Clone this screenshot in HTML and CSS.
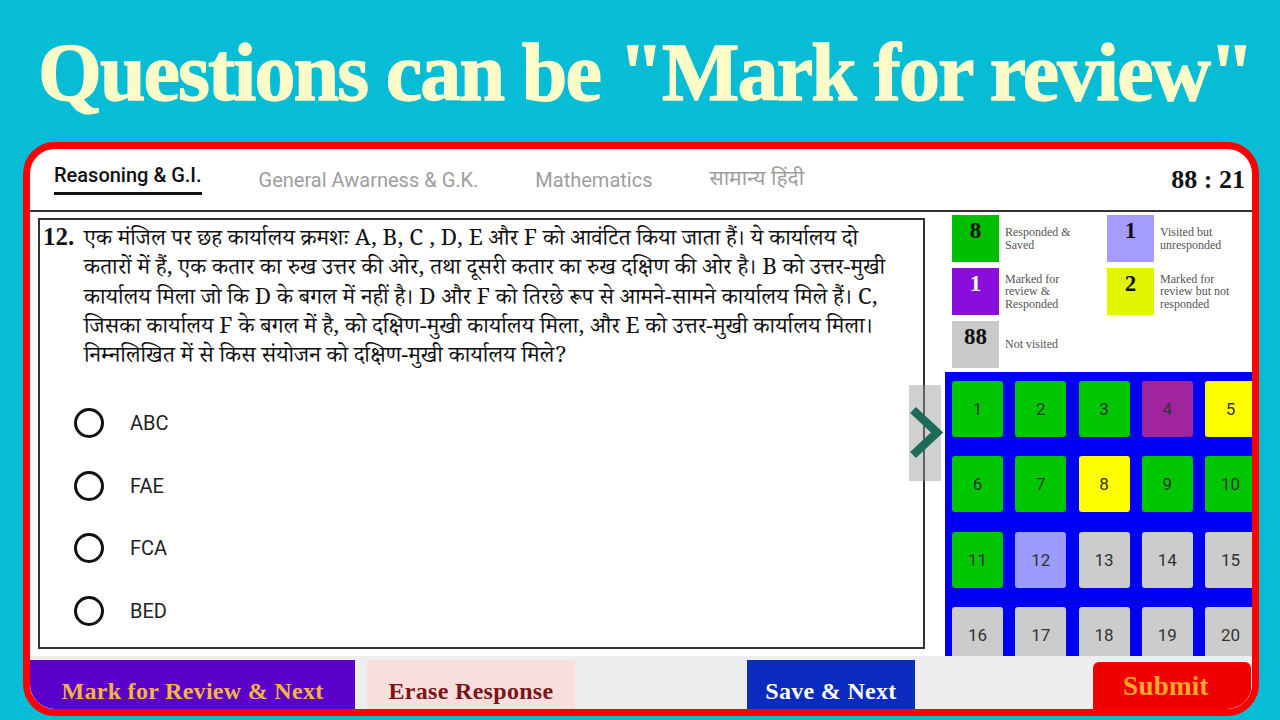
FILE: index.html
```html
<!DOCTYPE html>
<html lang="en">
<head>
<meta charset="utf-8">
<title>Mark for review</title>
<link rel="stylesheet" href="styles.css">
</head>
<body>
<div class="page">
  <h1 class="title">Questions can be "Mark for review"</h1>
  <div class="frame">
    <header class="tabs">
      <div class="tab active">Reasoning &amp; G.I.</div>
      <div class="tab">General Awarness &amp; G.K.</div>
      <div class="tab">Mathematics</div>
      <div class="tab hi">सामान्य हिंदी</div>
      <div class="timer">88 : 21</div>
    </header>
    <div class="main">
      <div class="left">
        <div class="qbox">
          <div class="q">
            <span class="qno">12.</span>
            <div class="qtext">
              <span class="ln">एक मंजिल पर छह कार्यालय क्रमशः A, B, C , D, E और F को आवंटित किया जाता हैं। ये कार्यालय दो</span>
              <span class="ln">कतारों में हैं, एक कतार का रुख उत्तर की ओर, तथा दूसरी कतार का रुख दक्षिण की ओर है। B को उत्तर-मुखी</span>
              <span class="ln">कार्यालय मिला जो कि D के बगल में नहीं है। D और F को तिरछे रूप से आमने-सामने कार्यालय मिले हैं। C,</span>
              <span class="ln">जिसका कार्यालय F के बगल में है, को दक्षिण-मुखी कार्यालय मिला, और E को उत्तर-मुखी कार्यालय मिला।</span>
              <span class="ln">निम्नलिखित में से किस संयोजन को दक्षिण-मुखी कार्यालय मिले?</span>
            </div>
          </div>
          <div class="options">
            <div class="opt"><span class="radio"></span><span class="olabel">ABC</span></div>
            <div class="opt"><span class="radio"></span><span class="olabel">FAE</span></div>
            <div class="opt"><span class="radio"></span><span class="olabel">FCA</span></div>
            <div class="opt"><span class="radio"></span><span class="olabel">BED</span></div>
          </div>
        </div>
        <div class="handle">
          <svg width="32" height="96" viewBox="0 0 32 96" class="chev">
            <path d="M4 25 L28 47.5 L4 70" fill="none" stroke="#1d6b5b" stroke-width="8.5" stroke-linejoin="miter"/>
          </svg>
        </div>
      </div>
      <aside class="panel">
        <div class="legend">
          <div class="litem"><div class="lbox green">8</div><div class="ltext">Responded &amp;<br>Saved</div></div>
          <div class="litem"><div class="lbox lav">1</div><div class="ltext">Visited but<br>unresponded</div></div>
          <div class="litem"><div class="lbox purple">1</div><div class="ltext">Marked for<br>review &amp;<br>Responded</div></div>
          <div class="litem"><div class="lbox yellow">2</div><div class="ltext">Marked for<br>review but not<br>responded</div></div>
          <div class="litem"><div class="lbox grey">88</div><div class="ltext">Not visited</div></div>
        </div>
        <div class="grid">
          <div class="cell c-g">1</div>
          <div class="cell c-g">2</div>
          <div class="cell c-g">3</div>
          <div class="cell c-p">4</div>
          <div class="cell c-y">5</div>
          <div class="cell c-g">6</div>
          <div class="cell c-g">7</div>
          <div class="cell c-y">8</div>
          <div class="cell c-g">9</div>
          <div class="cell c-g">10</div>
          <div class="cell c-g">11</div>
          <div class="cell c-l">12</div>
          <div class="cell c-n">13</div>
          <div class="cell c-n">14</div>
          <div class="cell c-n">15</div>
          <div class="cell c-n">16</div>
          <div class="cell c-n">17</div>
          <div class="cell c-n">18</div>
          <div class="cell c-n">19</div>
          <div class="cell c-n">20</div>
        </div>
      </aside>
    </div>
    <footer class="actions">
      <div class="btn mark">Mark for Review &amp; Next</div>
      <div class="btn erase">Erase Response</div>
      <div class="btn save">Save &amp; Next</div>
      <div class="btn submit">Submit</div>
    </footer>
  </div>
</div>
</body>
</html>
```

FILE: styles.css
```css
* { box-sizing: border-box; }
html, body { margin: 0; padding: 0; }
body { background: #06bdd5; }

.page {
  width: 1280px;
  height: 720px;
  overflow: hidden;
  background: #06bdd5;
}

.title {
  margin: 0;
  padding: 33px 0 0 38px;
  height: 113px;
  font-family: "Liberation Serif", serif;
  font-weight: 700;
  font-size: 82px;
  line-height: 80px;
  letter-spacing: -1.9px;
  color: #fdfbc8;
  -webkit-text-stroke: 1.3px #fdfbc8;
  white-space: nowrap;
}

.frame {
  margin: 29px 0 0 23px;
  width: 1236px;
  height: 574px;
  border: 7px solid #ff0000;
  border-radius: 32px;
  background: #fff;
  overflow: hidden;
  display: flex;
  flex-direction: column;
}

/* header */
.tabs {
  height: 63px;
  flex: none;
  border-bottom: 2px solid #333;
  display: flex;
  align-items: flex-start;
  padding-left: 24px;
  gap: 57px;
  font-family: Roboto, "Noto Sans", sans-serif;
}
.tab {
  padding-top: 19px;
  font-size: 20px;
  line-height: 24px;
  color: #9e9e9e;
  white-space: nowrap;
}
.tab.active {
  padding-top: 14px;
  padding-bottom: 5px;
  font-size: 20px;
  font-weight: 500;
  color: #111;
  border-bottom: 3px solid #111;
}
.tab.hi { font-family: "Noto Sans Devanagari", Roboto, sans-serif; font-size: 21px; }
.timer {
  margin-left: auto;
  padding: 16px 7px 0 0;
  font-family: "Liberation Serif", serif;
  font-weight: 700;
  font-size: 26px;
  line-height: 30px;
  color: #111;
}

/* main */
.main {
  height: 444px;
  flex: none;
  display: flex;
}
.left {
  position: relative;
  width: 915px;
  flex: none;
  padding: 6px 0 0 8px;
}
.qbox {
  width: 887px;
  height: 431px;
  border: 2px solid #333;
  padding: 3px 0 0 3px;
}
.q {
  display: flex;
  align-items: baseline;
}
.qno {
  width: 41px;
  flex: none;
  font-family: "Liberation Serif", serif;
  font-weight: 700;
  font-size: 25px;
  color: #111;
}
.qtext {
  font-family: "Noto Serif Devanagari", "Noto Sans Devanagari", "Liberation Serif", serif;
  font-size: 22.5px;
  line-height: 29.3px;
  color: #111;
}
.ln { display: block; white-space: nowrap; height: 29.3px; }

.options { margin-top: 18px; }
.opt {
  height: 62.7px;
  display: flex;
  align-items: center;
}
.radio {
  width: 30px;
  height: 30px;
  border: 3px solid #111;
  border-radius: 50%;
  margin-left: 31px;
  margin-right: 26px;
  flex: none;
}
.olabel {
  font-family: Roboto, "Noto Sans", sans-serif;
  font-size: 20px;
  color: #222;
}

.handle {
  position: absolute;
  left: 879px;
  top: 173px;
  width: 32px;
  height: 96px;
  background: rgba(150, 150, 150, 0.45);
}
.chev { display: block; overflow: visible; }

/* right panel */
.panel {
  width: 307px;
  flex: none;
  display: flex;
  flex-direction: column;
}
.legend {
  height: 160px;
  flex: none;
  padding: 3px 0 0 7px;
  display: grid;
  grid-template-columns: 155px 145px;
  grid-auto-rows: 47px;
  row-gap: 6px;
}
.litem {
  display: flex;
  align-items: center;
  gap: 6px;
}
.lbox {
  width: 47px;
  height: 47px;
  flex: none;
  padding-top: 4px;
  text-align: center;
  font-family: "Liberation Serif", serif;
  font-weight: 700;
  font-size: 23px;
  line-height: 23px;
  color: #111;
}
.lbox.green { background: #00bf00; }
.lbox.lav { background: #a59cff; }
.lbox.purple { background: #8a0edb; color: #fff; }
.lbox.yellow { background: #e2f600; }
.lbox.grey { background: #c9c9c9; }
.ltext {
  font-family: "Liberation Serif", serif;
  font-size: 12px;
  line-height: 12.6px;
  color: #555;
}

.grid {
  height: 284px;
  flex: none;
  width: 308px;
  background: #0000f5;
  overflow: hidden;
  padding: 9px 0 0 7px;
  display: grid;
  grid-template-columns: repeat(5, 51px);
  grid-auto-rows: 56px;
  column-gap: 12.25px;
  row-gap: 19.3px;
}
.cell {
  border-radius: 3px;
  display: flex;
  align-items: center;
  justify-content: center;
  font-family: Roboto, "Noto Sans", sans-serif;
  font-size: 17px;
  color: #333;
}
.c-g { background: #00c600; }
.c-p { background: #a0249d; }
.c-y { background: #ffff00; }
.c-l { background: #9c9cff; }
.c-n { background: #cccccc; }

/* footer */
.actions {
  height: 53px;
  flex: none;
  background: #eeeeee;
  padding-top: 4px;
  display: flex;
  align-items: flex-start;
}
.btn {
  height: 49px;
  padding-top: 13px;
  text-align: center;
  font-family: "Liberation Serif", serif;
  font-weight: 700;
  font-size: 24px;
  line-height: 36px;
  letter-spacing: 0.3px;
  white-space: nowrap;
  flex: none;
}
.mark { width: 325px; background: #5a00cb; color: #f6b540; }
.erase { width: 208px; margin-left: 12px; background: #f9dede; color: #7e1416; }
.save { width: 168px; margin-left: 172px; background: #0a2bbe; color: #fff; }
.submit {
  width: 158px;
  margin-left: 178px;
  margin-top: 2px;
  height: 47px;
  padding-top: 6px;
  padding-right: 12px;
  background: #f20000;
  color: #ffa928;
  font-size: 27px;
  border-radius: 6px 6px 0 0;
}
```
